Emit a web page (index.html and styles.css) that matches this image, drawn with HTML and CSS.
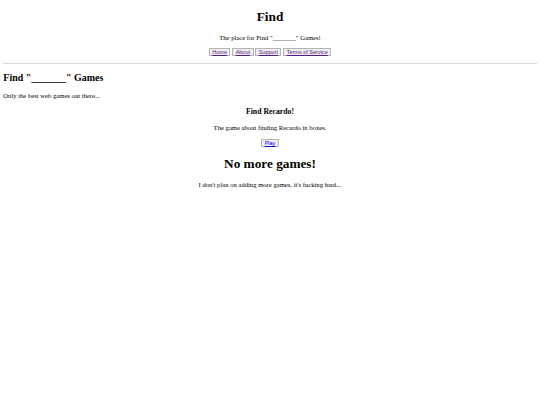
FILE: index.html
```html
<!DOCTYPE html>
<html class="page">
<head>
<meta charset="utf-8">
<title>Find</title>
<link rel="stylesheet" href="styles.css">
</head>
<body class="body">
<header class="header">
  <h1 class="title">Find</h1>
  <p class="tagline">The place for Find "_______" Games!</p>
  <nav class="nav">
    <button class="navbtn"><a class="navlink" href="#">Home</a></button>
    <button class="navbtn"><a class="navlink" href="#">About</a></button>
    <button class="navbtn"><a class="navlink" href="#">Support</a></button>
    <button class="navbtn"><a class="navlink" href="#">Terms of Service</a></button>
  </nav>
</header>
<hr class="rule">
<main class="main">
  <h2 class="section-title">Find "_______" Games</h2>
  <p class="section-text">Only the best web games out there...</p>
  <div class="game">
    <h3 class="game-title">Find Recardo!</h3>
    <p class="game-text">The game about finding Recardo in boxes.</p>
    <button class="navbtn playbtn"><a class="playlink" href="#">Play</a></button>
    <h1 class="nomore">No more games!</h1>
    <p class="game-text">I don't plan on adding more games, it's fucking hard...</p>
  </div>
</main>
</body>
</html>
```
FILE: styles.css
```css
.page {
  zoom: 0.415;
  background: #ffffff;
}
.body {
  margin: 8px;
  font-family: "Liberation Serif", "Times New Roman", serif;
  color: #000000;
}
.header {
  text-align: center;
}
.title {
  font-size: 2em;
  margin: 14px 0 21.44px;
}
.tagline {
  margin: 1em 0;
}
.nav {
  display: flex;
  justify-content: center;
  gap: 4px;
}
.navbtn {
  font-family: "Liberation Sans", Arial, sans-serif;
  font-size: 13.33px;
  background: #efefef;
  border: 2px solid #b4b4b4;
  padding: 1px 6px;
}
.playbtn {
  margin-top: 3px;
}
.navlink {
  color: #551a8b;
}
.playlink {
  color: #0000ee;
}
.rule {
  margin: 16px 0 13px;
  border: 0;
  border-top: 3px solid #d8d8d8;
}
.section-title {
  font-size: 1.5em;
  margin: 0.83em 0;
}
.section-text {
  margin: 1em 0;
}
.game {
  text-align: center;
}
.game-title {
  font-size: 1.17em;
  margin: 20px 0 1em;
}
.game-text {
  margin: 1em 0;
}
.nomore {
  font-size: 2em;
  margin: 0.67em 0;
}
```
